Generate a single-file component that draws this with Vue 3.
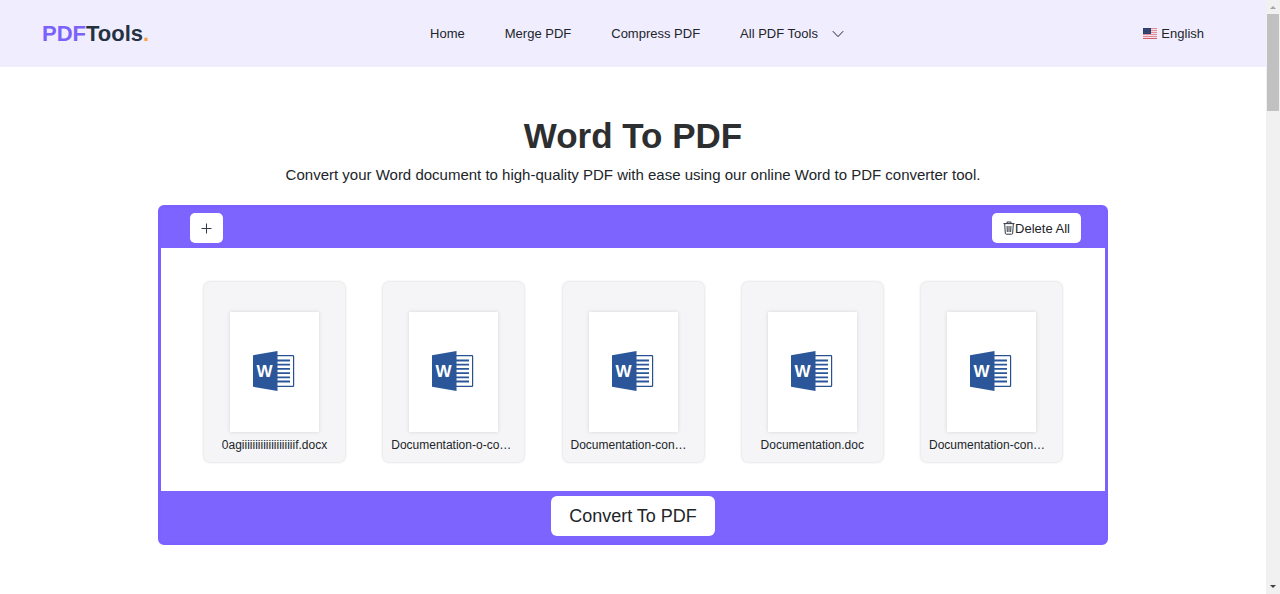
<script setup>
const links = ['Home', 'Merge PDF', 'Compress PDF']
const files = [
  { id: 1, name: '0agiiiiiiiiiiiiiiiiiiiif.docx', long: false },
  { id: 2, name: 'Documentation-o-co…', long: true },
  { id: 3, name: 'Documentation-con…', long: true },
  { id: 4, name: 'Documentation.doc', long: false },
  { id: 5, name: 'Documentation-con…', long: true },
]
</script>

<template>
  <div class="window">
    <div class="page">
      <header class="site-header">
        <a class="logo" href="#"><span class="logo-pdf">PDF</span>Tools<span class="logo-dot">.</span></a>
        <nav class="nav">
          <a v-for="link in links" :key="link" href="#">{{ link }}</a>
          <a class="all-tools" href="#">All PDF Tools
            <svg class="chevron" viewBox="0 0 12 12" aria-hidden="true">
              <path d="M.8 3.2 6 8.6l5.2-5.4" fill="none" stroke="currentColor" stroke-width="1" />
            </svg>
          </a>
        </nav>
        <a class="language" href="#">
          <svg class="flag" viewBox="0 0 14 11" aria-hidden="true">
            <rect width="14" height="11" fill="#f4dde5" />
            <path d="M0 .5h14M0 2.5h14M0 4.5h14M0 6.5h14M0 8.5h14M0 10.5h14" stroke="#e08f9c" stroke-width="1" />
            <path d="M0 10.5h14" stroke="#d0606e" stroke-width="1" />
            <rect width="8" height="6" fill="#2b3d69" />
            <path d="M1 1.5h6M1.5 3h5M1 4.5h6" stroke="#697493" stroke-width=".5" stroke-dasharray=".6 .7" />
          </svg>
          English
        </a>
      </header>

      <main class="content">
        <h1>Word To PDF</h1>
        <p class="intro">Convert your Word document to high-quality PDF with ease using our online Word to PDF converter tool.</p>

        <section class="converter">
          <div class="toolbar">
            <button class="tool add" type="button" aria-label="Add file">
              <svg viewBox="0 0 11 11" aria-hidden="true">
                <path d="M5.5 .5v10M.5 5.5h10" stroke="#343a4a" stroke-width="1" />
              </svg>
            </button>
            <button class="tool" type="button">
              <svg class="trash" viewBox="0 0 12 14" fill="none" stroke="#303744" aria-hidden="true">
                <path d="M.5 2.6h11M4 2.5V1h4v1.5M1.7 3l.6 9.2q.1 1 1.1 1h5.2q1 0 1.1-1l.6-9.2M4.1 5l.2 6M6 5v6M7.9 5l-.2 6" />
              </svg>Delete All
            </button>
          </div>

          <ul class="files">
            <li v-for="file in files" :key="file.id" class="file">
              <div class="sheet">
                <svg viewBox="0 0 42 40" aria-hidden="true">
                  <rect x="23" y="4.7" width="17.6" height="30.7" rx=".6" fill="#fff" stroke="#285193" stroke-width="1.2" />
                  <path d="M23 9.5h14M23 13.7h14M23 17.9h14M23 22.1h14M23 26.3h14M23 30.5h14" stroke="#2b579a" stroke-width="1.8" />
                  <path d="M0 4.3 24.5 0v40L0 35.7Z" fill="#2b579a" />
                  <text class="word-mark" x="11.5" y="26" text-anchor="middle" fill="#fff">W</text>
                </svg>
              </div>
              <span class="name" :class="{ long: file.long }">{{ file.name }}</span>
            </li>
          </ul>

          <div class="actions">
            <button class="convert" type="button">Convert To PDF</button>
          </div>
        </section>
      </main>
    </div>

    <div class="scrollbar" aria-hidden="true">
      <svg class="arrow" viewBox="0 0 14 14"><path d="M4 9h6L7 6Z" fill="#a3a3a3" /></svg>
      <div class="thumb"></div>
      <svg class="arrow" viewBox="0 0 14 14"><path d="M4 5h6L7 8Z" fill="#404040" /></svg>
    </div>
  </div>
</template>

<style>
body {
  background: #fff;
}
</style>

<style scoped>
.window {
  display: flex;
  min-height: 100vh;
  font-family: "Liberation Sans", Arial, sans-serif;
  color: #212529;
}
.window *,
.window {
  box-sizing: border-box;
}
.page {
  flex: 1;
  min-width: 0;
}
a {
  color: inherit;
  text-decoration: none;
}
.site-header {
  display: grid;
  grid-template-columns: 1fr auto 1fr;
  align-items: center;
  height: 67px;
  padding: 0 62px 0 42px;
  background: #f0edff;
  font-size: 13px;
}
.logo {
  font-size: 22px;
  font-weight: 700;
  color: #24323f;
}
.logo-pdf {
  color: #7a62fb;
}
.logo-dot {
  color: #ff9f43;
}
.nav {
  display: flex;
  gap: 40px;
  margin-left: 28px;
}
.all-tools {
  display: flex;
  align-items: center;
  gap: 14px;
}
.chevron {
  width: 12px;
  height: 12px;
}
.language {
  display: flex;
  align-items: center;
  justify-self: end;
  gap: 4px;
}
.flag {
  width: 14px;
  height: 11px;
}
.content {
  padding: 48px 16px;
  text-align: center;
}
h1 {
  margin: 0;
  font-size: 35px;
  line-height: 42px;
  color: #2d2e30;
}
.intro {
  margin: 6px 0 19px;
  font-size: 15px;
  line-height: 23px;
}
.converter {
  max-width: 950px;
  margin: 0 auto;
  overflow: hidden;
  border: 3px solid #7b61ff;
  border-radius: 6px;
  background: #7d64ff;
}
.toolbar {
  display: flex;
  justify-content: space-between;
  padding: 5px 24px 5px 29px;
}
button {
  border: 0;
  background: #fff;
  color: #212529;
  font-family: inherit;
}
.tool {
  display: flex;
  align-items: center;
  justify-content: center;
  height: 30px;
  padding: 0 11px;
  border-radius: 5px;
  font-size: 13px;
}
.add {
  width: 33px;
}
.add svg {
  flex: none;
  width: 11px;
  height: 11px;
}
.trash {
  width: 12px;
  height: 14px;
}
.files {
  display: flex;
  justify-content: space-between;
  margin: 0;
  padding: 34px 43px 29px;
  list-style: none;
  background: #fff;
}
.file {
  width: 141px;
  padding: 30px 8px 8px;
  border-radius: 6px;
  background: #f5f5f7;
  box-shadow: 0 0 3px rgba(0, 0, 0, 0.2);
}
.sheet {
  display: flex;
  align-items: center;
  justify-content: center;
  width: 89px;
  height: 120px;
  margin: 0 auto 5px;
  padding: 0 1px 2px 0;
  background: #fff;
  box-shadow: 0 0 4px rgba(0, 0, 0, 0.13);
}
.sheet svg {
  width: 42px;
  height: 40px;
}
.word-mark {
  font-size: 17px;
  font-weight: 700;
}
.name {
  display: block;
  font-size: 12px;
  line-height: 17px;
  white-space: nowrap;
}
.long {
  text-align: left;
}
.actions {
  padding: 5px 0 6px;
}
.convert {
  height: 40px;
  padding: 0 18px;
  border-radius: 6px;
  font-size: 18px;
}
.scrollbar {
  display: flex;
  flex-direction: column;
  width: 14px;
  background: #f1f1f1;
}
.arrow {
  width: 14px;
  height: 14px;
}
.thumb {
  height: 97px;
  margin: 0 1px auto;
  background: #c1c1c1;
}
</style>
